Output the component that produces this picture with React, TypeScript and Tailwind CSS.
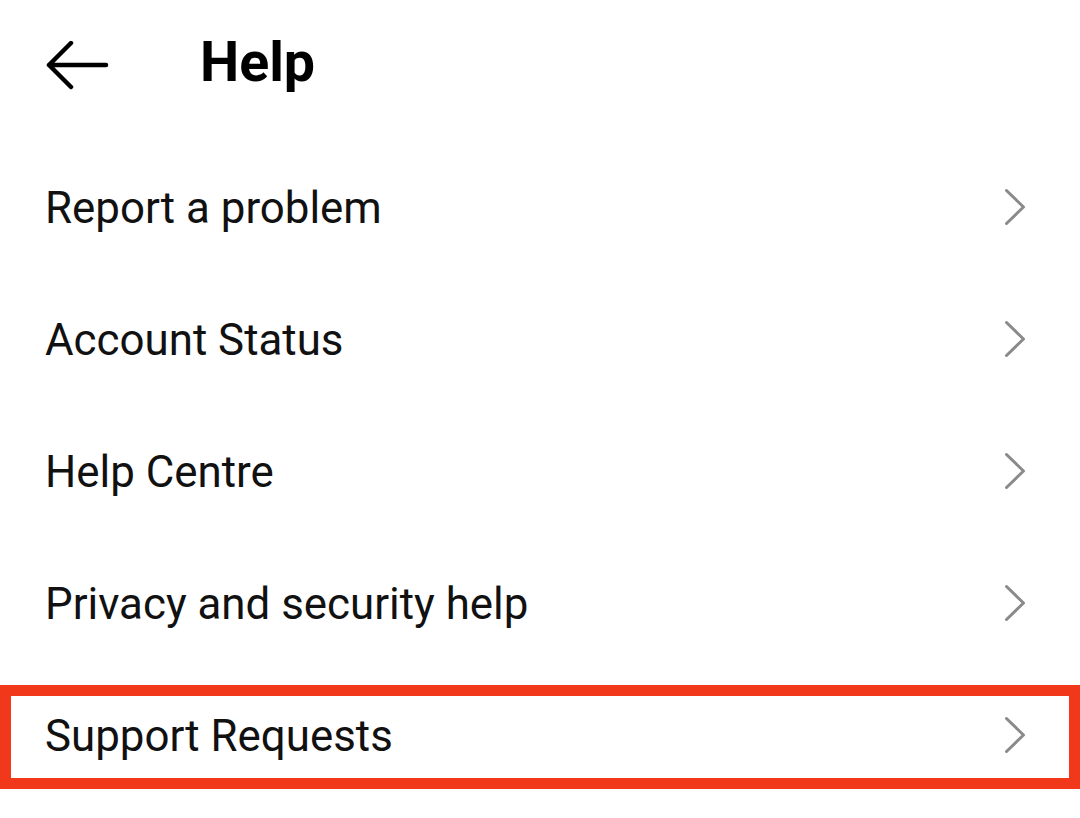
import React from "react";

const items = [
  "Report a problem",
  "Account Status",
  "Help Centre",
  "Privacy and security help",
  "Support Requests",
];

function Chevron() {
  return (
    <svg width="22" height="38" viewBox="0 0 22 38" fill="none">
      <path d="M2.5 2.5 L19.5 19 L2.5 35.5" stroke="#8a8a8a" strokeWidth="3" strokeLinecap="round" strokeLinejoin="round" />
    </svg>
  );
}

export default function App() {
  return (
    <div className="w-[1080px] h-[818px] bg-white overflow-hidden" style={{ fontFamily: "Roboto, 'Noto Sans', sans-serif" }}>
      <div className="h-[132px] flex items-center pl-[45px]">
        <svg width="64" height="50" viewBox="0 0 64 50" fill="none" className="shrink-0">
          <path d="M4 24 H61 M26 2 L4 24 L26 46" stroke="#000" strokeWidth="4.5" strokeLinecap="round" strokeLinejoin="round" />
        </svg>
        <div className="ml-[91px] text-[55.5px] font-bold text-black leading-none pb-[6px]">Help</div>
      </div>
      <div className="mt-[9px] flex flex-col">
        {items.map((t, i) => (
          <div key={t} className="relative h-[132px] flex items-center justify-between pl-[45px] pr-[54px]">
            <span className="text-[43.85px] text-[#111] leading-none pt-[4px]">{t}</span>
            <Chevron />
            {i === items.length - 1 && (
              <div className="absolute left-0 right-0 top-[16px] h-[104px] border-[11px] border-[#f2381a]" />
            )}
          </div>
        ))}
      </div>
    </div>
  );
}
